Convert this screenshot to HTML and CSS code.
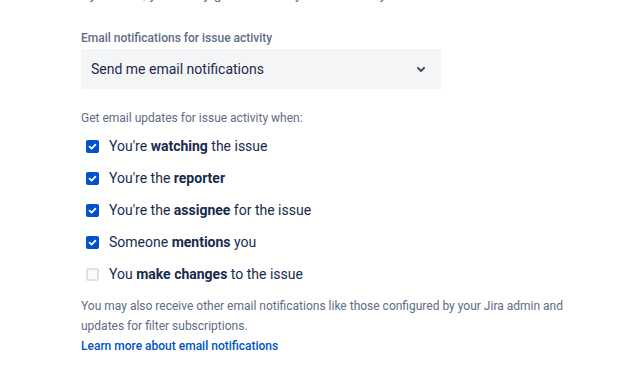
FILE: index.html
```html
<!DOCTYPE html>
<html lang="en">
<head>
<meta charset="utf-8">
<title>Email notifications</title>
<link rel="stylesheet" href="styles.css">
</head>
<body>
<div class="page">
  <p class="intro">By default, you'll only get notified by email when you're involved in an issue activity.</p>

  <div class="field">
    <label class="field-label">Email notifications for issue activity</label>
    <div class="select">
      <span class="select-value">Send me email notifications</span>
      <svg class="chevron" width="24" height="24" viewBox="0 0 24 24" aria-hidden="true">
        <path d="M8.3 10.3a1 1 0 0 1 1.4 0L12 12.6l2.3-2.3a1 1 0 1 1 1.4 1.4l-3 3a1 1 0 0 1-1.4 0l-3-3a1 1 0 0 1 0-1.4z" fill="#42526e"/>
      </svg>
    </div>
  </div>

  <p class="hint">Get email updates for issue activity when:</p>

  <ul class="options">
    <li class="option"><span class="box checked"><svg width="13" height="13" viewBox="0 0 13 13"><path d="M3.6 6.6l2 2 3.8-4" fill="none" stroke="#fff" stroke-width="1.8" stroke-linecap="round" stroke-linejoin="round"/></svg></span><span>You're <b>watching</b> the issue</span></li>
    <li class="option"><span class="box checked"><svg width="13" height="13" viewBox="0 0 13 13"><path d="M3.6 6.6l2 2 3.8-4" fill="none" stroke="#fff" stroke-width="1.8" stroke-linecap="round" stroke-linejoin="round"/></svg></span><span>You're the <b>reporter</b></span></li>
    <li class="option"><span class="box checked"><svg width="13" height="13" viewBox="0 0 13 13"><path d="M3.6 6.6l2 2 3.8-4" fill="none" stroke="#fff" stroke-width="1.8" stroke-linecap="round" stroke-linejoin="round"/></svg></span><span>You're the <b>assignee</b> for the issue</span></li>
    <li class="option"><span class="box checked"><svg width="13" height="13" viewBox="0 0 13 13"><path d="M3.6 6.6l2 2 3.8-4" fill="none" stroke="#fff" stroke-width="1.8" stroke-linecap="round" stroke-linejoin="round"/></svg></span><span>Someone <b>mentions</b> you</span></li>
    <li class="option"><span class="box"></span><span>You <b>make changes</b> to the issue</span></li>
  </ul>

  <p class="footer">You may also receive other email notifications like those configured by your Jira admin and updates for filter subscriptions.<br><a class="link" href="#">Learn more about email notifications</a></p>
</div>
</body>
</html>
```

FILE: styles.css
```css
html, body {
  margin: 0;
  padding: 0;
  background: #ffffff;
}

body {
  font-family: Roboto, "Open Sans", "Liberation Sans", sans-serif;
  color: #172b4d;
  overflow: hidden;
}

.page {
  padding-left: 81px;
  width: 500px;
}

.intro {
  margin: -16px 0 0 0;
  font-size: 14px;
  line-height: 20px;
  color: #5e6c84;
  white-space: nowrap;
  overflow: hidden;
  width: 360px;
}

.field {
  margin-top: 26px;
  display: flex;
  flex-direction: column;
}

.field-label {
  font-size: 12px;
  line-height: 16px;
  font-weight: 500;
  color: #5e6c84;
  margin-bottom: 3px;
}

.select {
  width: 360px;
  height: 40px;
  box-sizing: border-box;
  background: #f4f5f7;
  border-radius: 3px;
  display: flex;
  align-items: center;
  justify-content: space-between;
  padding: 0 8px 0 10px;
}

.select-value {
  font-size: 14px;
  color: #172b4d;
}

.chevron {
  display: block;
}

.hint {
  margin: 21px 0 0 0;
  font-size: 12px;
  line-height: 16px;
  color: #5e6c84;
}

.options {
  list-style: none;
  margin: 4px 0 0 0;
  padding: 0;
}

.option {
  height: 32px;
  display: flex;
  align-items: center;
  padding-left: 5px;
  gap: 10px;
  font-size: 14px;
  color: #172b4d;
}

.option b {
  font-weight: 700;
}

.box {
  width: 13px;
  height: 13px;
  box-sizing: border-box;
  border-radius: 2px;
  background: #fafbfc;
  border: 2px solid #dfe1e6;
  flex: none;
  display: flex;
}

.box.checked {
  background: #0052cc;
  border: none;
}

.box svg {
  display: block;
}

.footer {
  margin: 6px 0 0 0;
  font-size: 12px;
  line-height: 20px;
  color: #5e6c84;
  width: 490px;
}

.link {
  color: #0052cc;
  font-weight: 500;
  text-decoration: none;
}
```
